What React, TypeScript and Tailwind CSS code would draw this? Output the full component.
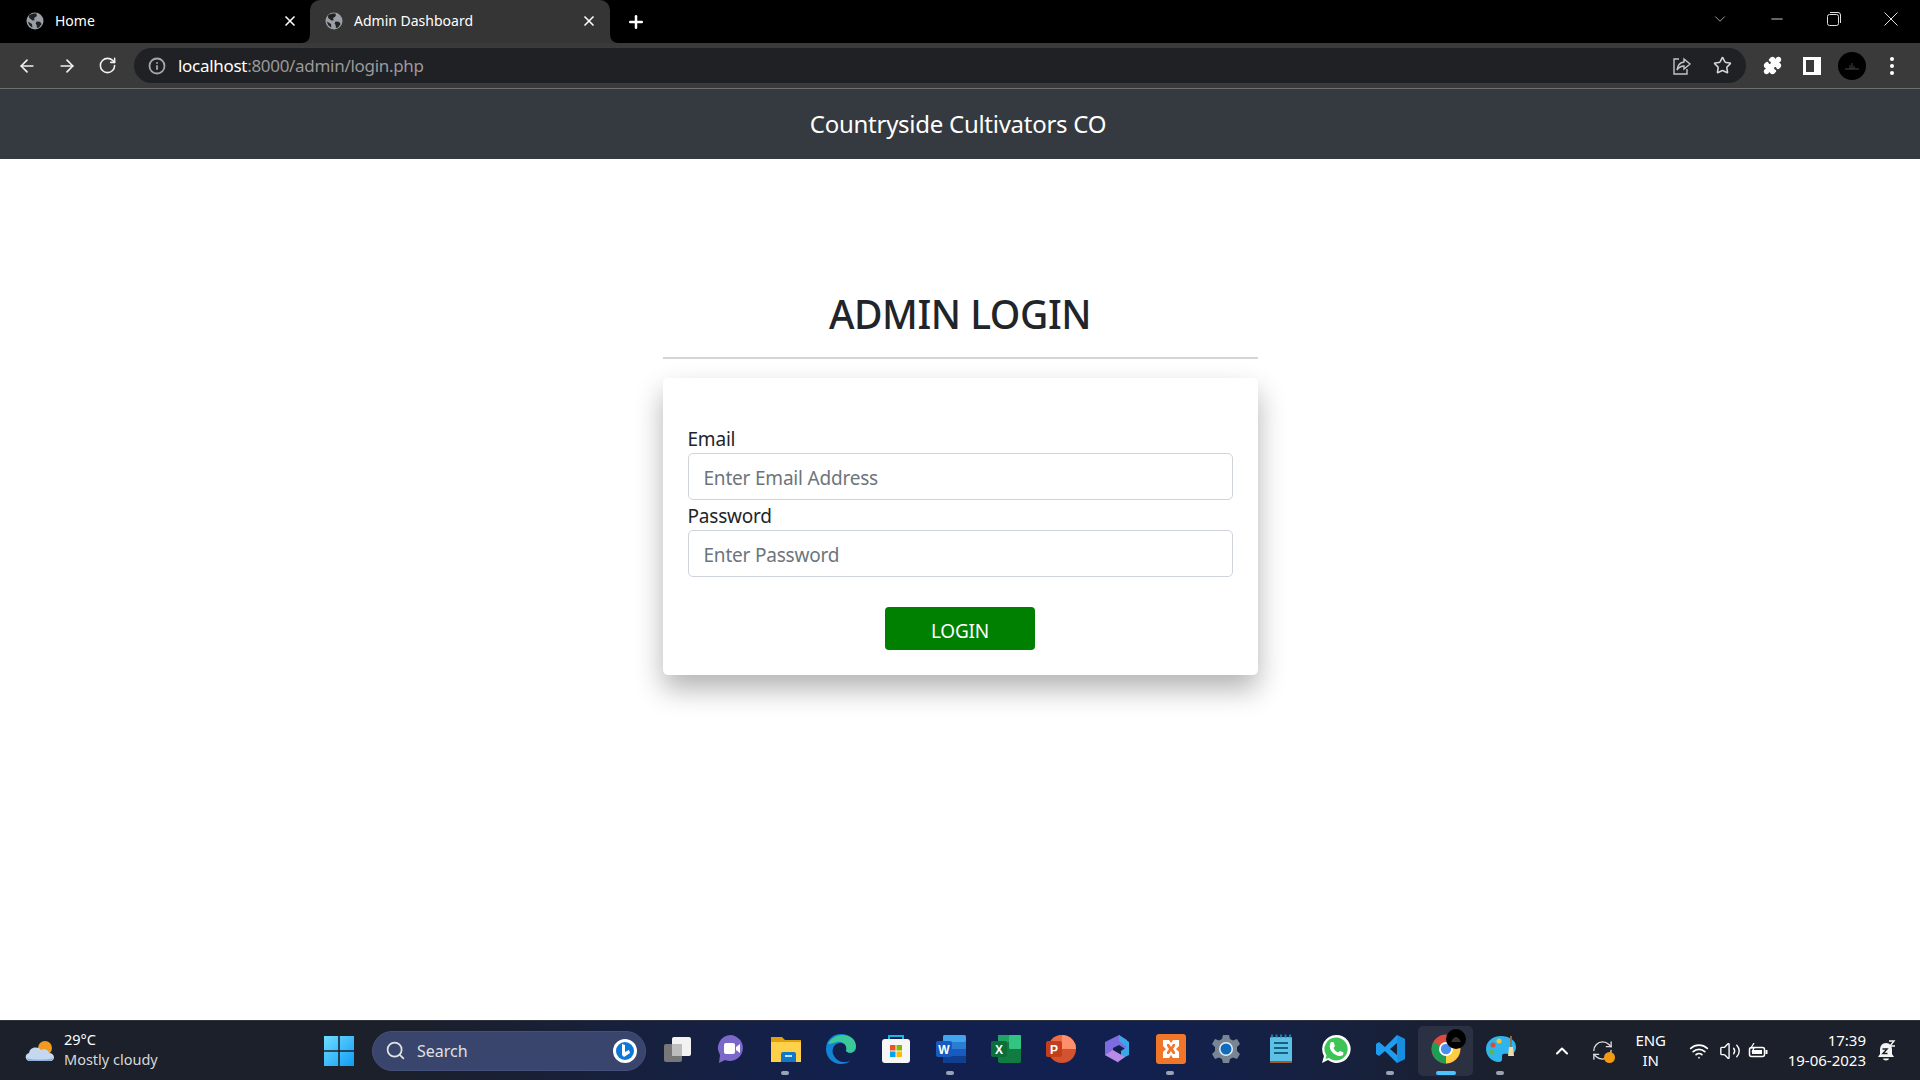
import React from "react";
import { ArrowLeft, ArrowRight, RotateCw, RefreshCw, Info, Star, Puzzle, X, Plus, ChevronDown, ChevronUp, Minus, Search, Wifi, Volume2 } from "lucide-react";

const Globe = () => (
  <svg width="18" height="18" viewBox="0 0 18 18">
    <circle cx="9" cy="9" r="8.5" fill="#9aa0a6" />
    <path d="M3 3.5 C5 2 8 1.4 10.5 1.6 L10.8 4 L8 6.2 L8.8 8.2 L6.5 8.6 L3.2 6 Z" fill="#202124" />
    <path d="M10.5 9.5 L14 9.8 L15.6 12 L13 15.4 L11 16 L10.6 13 L9.6 11.4 Z" fill="#202124" />
    <path d="M2 9.6 L6 12 L6.4 15.5 C4 14.6 2.4 12.4 2 9.6 Z" fill="#202124" />
  </svg>
);

const Tab = ({ title, active }: { title: string; active?: boolean }) => (
  <div className={`relative flex h-[43px] w-[300px] items-center pb-[2px] ${active ? "rounded-t-[10px] bg-[#353535] pl-[15px] pr-[13px]" : "pl-[26px] pr-[2px]"}`}>
    <Globe />
    <span className="ml-[11px] flex-1 text-[14px] leading-none text-white">{title}</span>
    <X size={16} color="#ffffff" strokeWidth={2.5} />
    {active && (
      <svg width="8" height="8" viewBox="0 0 8 8" className="absolute bottom-0 left-[-8px]"><path d="M8 0 V8 H0 A8 8 0 0 0 8 0 Z" fill="#353535" /></svg>
    )}
    {active && (
      <svg width="8" height="8" viewBox="0 0 8 8" className="absolute bottom-0 right-[-8px]"><path d="M0 0 V8 H8 A8 8 0 0 1 0 0 Z" fill="#353535" /></svg>
    )}
  </div>
);

const Slot = ({ children, dot, active }: { children: React.ReactNode; dot?: boolean; active?: boolean }) => (
  <div className={`relative flex h-[50px] w-[55px] shrink-0 items-center justify-center rounded-[5px] pb-[4px] ${active ? "bg-[#ffffff14]" : ""}`}>
    {children}
    {dot && <div className="absolute bottom-[1px] left-[23px] h-[4px] w-[8px] rounded-full bg-[#9aa3b5]" />}
    {active && <div className="absolute bottom-[1px] left-[18px] h-[4px] w-[20px] rounded-full bg-[#4cc2ff]" />}
  </div>
);

const Svg = ({ children, size = 30 }: { children: React.ReactNode; size?: number }) => (
  <svg width={size} height={size} viewBox="0 0 30 30">{children}</svg>
);

export default function App() {
  return (
    <div className="flex h-[1080px] w-[1920px] flex-col overflow-hidden bg-white font-['Noto_Sans','Open_Sans',sans-serif] text-[#212529]">
      {/* Chrome tab strip */}
      <div className="flex h-[43px] shrink-0 items-center bg-black">
        <div className="flex w-[310px]"><Tab title="Home" /></div>
        <Tab title="Admin Dashboard" active />
        <Plus size={20} color="#ffffff" strokeWidth={3} className="ml-[16px]" />
        <div className="flex-1" />
        <ChevronDown size={18} color="#b0b0b0" strokeWidth={1.2} className="mb-[6px] mr-[39px]" />
        <Minus size={18} color="#e0e0e0" strokeWidth={1.2} className="mb-[6px] mr-[41px]" />
        <svg width="14" height="14" viewBox="0 0 14 14" className="mb-[6px] mr-[43px]" fill="none" stroke="#e0e0e0" strokeWidth="1">
          <rect x="0.5" y="2.5" width="11" height="11" rx="2" />
          <path d="M3 .5 H11 A2.5 2.5 0 0 1 13.5 3 V11" />
        </svg>
        <svg width="14" height="14" viewBox="0 0 14 14" className="mb-[6px] mr-[22px]" stroke="#e0e0e0" strokeWidth="1"><path d="M.5 .5 L13.5 13.5 M13.5 .5 L.5 13.5" /></svg>
      </div>

      {/* Chrome toolbar */}
      <div className="flex h-[46px] shrink-0 items-center border-b border-[#6f6f6f] bg-[#3a3a3a] pl-[17px]">
        <ArrowLeft size={20} color="#f1f1f1" strokeWidth={2} />
        <ArrowRight size={20} color="#f1f1f1" strokeWidth={2} className="ml-[20px]" />
        <RotateCw size={19} color="#f1f1f1" strokeWidth={2} className="ml-[21px]" />
        <div className="ml-[17px] flex h-[35px] w-[1612px] items-center rounded-full bg-[#202124] pl-[14px]">
          <Info size={18} color="#a8a8a8" strokeWidth={2.4} />
          <span className="ml-[12px] text-[17px] tracking-[-0.3px] text-white">localhost<span className="text-[#9a9a9a]">:8000/admin/login.php</span></span>
          <div className="flex-1" />
          <svg width="20" height="20" viewBox="0 0 20 20" fill="none" stroke="#c4c4c4" strokeWidth="1.4" className="mr-[21px]">
            <path d="M7 3 H2 V18 H15 V13" />
            <path d="M12 3 L18 8 L12 13 V10 C9 10 7 11 5 14 C5.5 10 8 6.5 12 6 Z" />
          </svg>
          <Star size={19} color="#d6d6d6" strokeWidth={2} className="mr-[14px]" />
        </div>
        <Puzzle size={19} color="#ffffff" fill="#ffffff" className="ml-[17px]" />
        <svg width="18" height="18" viewBox="0 0 18 18" className="ml-[21px]">
          <path d="M0 0 H18 V18 H0 Z M3 3 V15 H11 V3 Z" fill="#ffffff" fillRule="evenodd" />
        </svg>
        <div className="ml-[17px] flex h-[28px] w-[28px] items-center justify-center rounded-full bg-black">
          <svg width="14" height="8" viewBox="0 0 14 8" stroke="#444" strokeWidth="1" fill="none"><path d="M0 7 H14 M5 7 V3 M7 7 V1 M9 7 V4" /></svg>
        </div>
        <div className="ml-[24px] flex flex-col gap-[3px]">
          <div className="h-[4px] w-[4px] rounded-full bg-white" />
          <div className="h-[4px] w-[4px] rounded-full bg-white" />
          <div className="h-[4px] w-[4px] rounded-full bg-white" />
        </div>
      </div>

      {/* Site navbar */}
      <div className="flex h-[70px] shrink-0 items-center justify-center bg-[#343a40] pr-[4px]">
        <span className="text-[24px] tracking-[-0.27px] text-white">Countryside Cultivators CO</span>
      </div>

      {/* Page */}
      <main className="flex flex-1 flex-col items-center pt-[127px]">
        <div className="w-[595px]">
          <h1 className="pt-[1px] text-center text-[39px] font-[550] leading-[54px] tracking-[-0.45px]">ADMIN LOGIN</h1>
          <div className="mt-[16px] h-[2px] bg-[#d4d4d4]" />
          <form className="mt-[19px] h-[297px] rounded-[5px] bg-white px-[25px] pt-[46px] shadow-[0_14px_28px_rgba(0,0,0,0.3)]">
            <label className="block pt-[1px] text-[19px] leading-[28px] tracking-[-0.2px]">Email</label>
            <input readOnly placeholder="Enter Email Address" className="block h-[47px] w-full rounded-[5px] border border-[#ced4da] px-[15px] pt-[2px] text-[19px] tracking-[-0.2px] outline-none placeholder:text-[#6c757d]" />
            <label className="mt-[1px] block pt-[1px] text-[19px] leading-[28px] tracking-[-0.2px]">Password</label>
            <input readOnly placeholder="Enter Password" className="block h-[47px] w-full rounded-[5px] border border-[#ced4da] px-[15px] pt-[2px] text-[19px] tracking-[-0.2px] outline-none placeholder:text-[#6c757d]" />
            <div className="mt-[30px] flex justify-center">
              <button type="button" className="h-[43px] w-[150px] rounded-[4px] bg-[#008000] pt-[5px] text-[19px] tracking-[-0.2px] text-white">LOGIN</button>
            </div>
          </form>
        </div>
      </main>

      {/* Windows taskbar */}
      <div className="flex h-[60px] shrink-0 items-center border-t border-[#30343e] bg-[linear-gradient(90deg,#1c202a_0%,#1c202a_20%,#12204f_45%,#12204f_60%,#1c202a_80%,#1c202a_100%)] text-white">
        <svg width="32" height="24" viewBox="0 0 32 24" className="ml-[24px]">
          <circle cx="21" cy="9" r="7" fill="#f09a1e" />
          <path d="M6 22 C1 22 0 15 5 14 C6 8 14 7 17 11 C20 9 25 11 25 14 C31 14 32 22 26 22 Z" fill="#c5d8ef" />
          <path d="M3 19 C8 21 22 21 29 19 C29 21 27 22 26 22 H6 C5 22 3.5 21 3 19 Z" fill="#8fb2dc" />
        </svg>
        <div className="ml-[8px] flex w-[234px] flex-col pb-[3px] text-[14.5px] leading-[20px]">
          <span>29°C</span>
          <span className="text-[#d8d8d8]">Mostly cloudy</span>
        </div>
        <svg width="30" height="30" viewBox="0 0 30 30" className="ml-[26px]">
          <defs><linearGradient id="win" x1="0" y1="0" x2="1" y2="1"><stop offset="0" stopColor="#6fdcff" /><stop offset="1" stopColor="#0f9cf5" /></linearGradient></defs>
          <path d="M0 0 H14.2 V14.2 H0 Z M15.8 0 H30 V14.2 H15.8 Z M0 15.8 H14.2 V30 H0 Z M15.8 15.8 H30 V30 H15.8 Z" fill="url(#win)" />
        </svg>
        <div className="ml-[18px] flex h-[40px] w-[274px] items-center rounded-full border border-[#45507a] bg-[#39456d] pl-[12px] pr-[8px]">
          <Search size={21} color="#e2e2e2" strokeWidth={2} />
          <span className="ml-[11px] flex-1 text-[16px] text-[#e0e0e0]">Search</span>
          <div className="flex h-[24px] w-[24px] items-center justify-center rounded-full bg-white">
            <svg width="20" height="20" viewBox="0 0 20 20"><circle cx="10" cy="10" r="9" fill="#0e78d8" /><path d="M7 3 L10 4 V11 L14 9 L15 12 L9 16 L7 14 Z" fill="#ffffff" /></svg>
          </div>
        </div>
        <div className="ml-[2px] flex items-center">
          <Slot><Svg><rect x="11" y="3" width="19" height="19" rx="2" fill="#f2f2f2" /><rect x="3" y="10" width="18" height="18" rx="2" fill="#777" /><rect x="11" y="10" width="10" height="12" fill="#bdbdbd" /></Svg></Slot>
          <Slot><Svg><path d="M15 1 A13 13 0 1 1 9 26 L3 29 L4 21 A13 13 0 0 1 15 1 Z" fill="#7b68c9" /><rect x="8" y="9" width="11" height="11" rx="2" fill="#fff" /><path d="M20 13 L24 10 V19 L20 16 Z" fill="#fff" /></Svg></Slot>
          <Slot dot><Svg><path d="M0 3 H11 L14 6 H30 V28 H0 Z" fill="#e0a010" /><path d="M0 8 H30 V28 H0 Z" fill="#ffd04a" /><path d="M10 20 Q10 18 12 18 H23 Q25 18 25 20 V28 H10 Z" fill="#0f78c8" /><rect x="14" y="21" width="7" height="2" fill="#bfe3ff" /></Svg></Slot>
          <Slot><Svg><path d="M15 0 C24 0 30 6 30 13 C30 19 23 20 20 17 C22 13 19 8 13 9 C7 10 5 17 8 22 C11 28 20 30 25 26 C22 29 18 30 15 30 C6 30 0 23 0 15 C0 6 7 0 15 0 Z" fill="#1383d4" /><path d="M2 10 C6 1 18 -2 26 4 C31 8 31 16 27 18 C24 20 21 18 20 17 C22 12 17 7 11 8 C7 9 4 10 2 10 Z" fill="#3cc99a" /></Svg></Slot>
          <Slot><Svg><path d="M8 6 V2 H22 V6" fill="none" stroke="#1ab4e8" strokeWidth="2" /><rect x="1" y="5" width="28" height="24" rx="3" fill="#f6f6f6" /><rect x="9" y="11" width="5.5" height="5.5" fill="#f25022" /><rect x="15.5" y="11" width="5.5" height="5.5" fill="#7fba00" /><rect x="9" y="17.5" width="5.5" height="5.5" fill="#00a4ef" /><rect x="15.5" y="17.5" width="5.5" height="5.5" fill="#ffb900" /></Svg></Slot>
          <Slot dot><Svg><rect x="7" y="1" width="23" height="28" rx="2" fill="#2b7cd3" /><rect x="7" y="1" width="23" height="7" rx="2" fill="#41a5ee" /><rect x="7" y="15" width="23" height="7" fill="#185abd" /><path d="M7 22 H30 V27 Q30 29 28 29 H9 Q7 29 7 27 Z" fill="#103f91" /><rect x="0" y="7" width="16" height="16" rx="2" fill="#185abd" /><text x="8" y="19.5" textAnchor="middle" fontSize="12" fontWeight="700" fill="#fff" fontFamily="Liberation Sans">W</text></Svg></Slot>
          <Slot><Svg><rect x="7" y="1" width="23" height="28" rx="2" fill="#107c41" /><rect x="18" y="1" width="12" height="14" rx="1" fill="#33c481" /><rect x="7" y="1" width="11" height="7" fill="#21a366" /><rect x="0" y="7" width="16" height="16" rx="2" fill="#0d6e3a" /><text x="8" y="19.5" textAnchor="middle" fontSize="12" fontWeight="700" fill="#fff" fontFamily="Liberation Sans">X</text></Svg></Slot>
          <Slot><Svg><circle cx="16" cy="15" r="14" fill="#d35230" /><path d="M16 1 A14 14 0 0 1 30 15 H16 Z" fill="#ff8f6b" /><path d="M16 1 V15 H2 A14 14 0 0 1 16 1 Z" fill="#ed6c47" /><rect x="0" y="7" width="16" height="16" rx="2" fill="#c43e1c" /><text x="8" y="19.5" textAnchor="middle" fontSize="12" fontWeight="700" fill="#fff" fontFamily="Liberation Sans">P</text></Svg></Slot>
          <Slot><Svg><path d="M4 8 L18 1 L26 6 V16 L18 11 L12 14 V21 L18 29 L4 21 Z" fill="#7d6be0" /><path d="M18 1 L28 8 V21 L20 25 V17 L26 13 L18 7 Z" fill="#3aa8e6" /><path d="M4 21 L12 16 L24 23 L17 28 Z" fill="#b98ae6" /></Svg></Slot>
          <Slot dot><Svg><rect width="30" height="30" rx="3" fill="#f2762a" /><path d="M7 6 H13 L15 9 L17 6 H23 V12 L20 15 L23 18 V24 H17 L15 21 L13 24 H7 V18 L10 15 L7 12 Z M11 10 V12 L13 15 L11 18 V20 H13 L15 17 L17 20 H19 V18 L17 15 L19 12 V10 H17 L15 13 L13 10 Z" fill="#fff" fillRule="evenodd" /></Svg></Slot>
          <Slot><Svg><path d="M12 1 H18 L19 5 L22 6.5 L26 5 L29 10 L26 13 V17 L29 20 L26 25 L22 23.5 L19 25 L18 29 H12 L11 25 L8 23.5 L4 25 L1 20 L4 17 V13 L1 10 L4 5 L8 6.5 L11 5 Z" fill="#7a8594" /><circle cx="15" cy="15" r="7" fill="#e8eef5" /><circle cx="15" cy="15" r="5.5" fill="#0f6cbd" /></Svg></Slot>
          <Slot><Svg><rect x="4" y="3" width="22" height="26" rx="1" fill="#5cc1e6" /><rect x="4" y="27" width="22" height="2" fill="#a05a2c" /><path d="M5 2 H25" stroke="#1d7fa8" strokeWidth="3" strokeDasharray="2 2.5" /><path d="M8 9 H22 M8 14 H22 M8 19 H22" stroke="#17607f" strokeWidth="2" /></Svg></Slot>
          <Slot><Svg><path d="M15 1 A14 14 0 1 1 7 26 L1 29 L3 22 A14 14 0 0 1 15 1 Z" fill="#fff" /><path d="M15 3.5 A11.5 11.5 0 1 1 8 24 L4.5 25 L5.5 21.5 A11.5 11.5 0 0 1 15 3.5 Z" fill="#3ec455" /><path d="M10 8 L12.5 8 L14 12 L12.5 14 C13.5 16 15 17.5 17 18.5 L19 17 L22.5 18.5 L22 21 C19 23 14 21.5 11 18 C8.5 15 8 11 10 8 Z" fill="#fff" /></Svg></Slot>
          <Slot dot><Svg><path d="M21 1 L29 5 V25 L21 29 L9 17 L3 22 L0 20 V10 L3 8 L9 13 Z M21 9 L14 15 L21 21 Z" fill="#1f9cf0" fillRule="evenodd" /><path d="M21 1 L29 5 V25 L21 29 Z M21 9 V21" fill="#0f7ecb" opacity="0.45" /></Svg></Slot>
          <div className="relative">
            <Slot active>
              <Svg>
                <circle cx="15" cy="15" r="14.5" fill="#dd4b3e" />
                <path d="M15 15 L27.5 8 A14.5 14.5 0 0 1 15 29.5 Z" fill="#ffcd40" />
                <path d="M15 15 L15 29.5 A14.5 14.5 0 0 1 2.5 8 Z" fill="#1e9e55" />
                <circle cx="15" cy="15" r="7" fill="#fff" />
                <circle cx="15" cy="15" r="5.2" fill="#4a8ef0" />
              </Svg>
            </Slot>
            <div className="absolute right-[7px] top-[3px] flex h-[20px] w-[20px] items-center justify-center rounded-full bg-black">
              <svg width="10" height="6" viewBox="0 0 10 6"><path d="M0 6 Q5 -4 10 6 Z" fill="#333" /></svg>
            </div>
          </div>
          <Slot dot><Svg><path d="M15 2 C6 2 0 8 0 15 C0 22 6 28 13 28 C17 28 16 24 16 22 C16 19 20 20 23 20 C28 20 30 17 30 13 C30 6 23 2 15 2 Z" fill="#2fb4ee" /><circle cx="7" cy="11" r="2.5" fill="#e04a3a" /><circle cx="6" cy="18" r="2.5" fill="#5aba47" /><circle cx="13" cy="7" r="2.5" fill="#f4c430" /><path d="M24 2 L26 2 L25.5 15 L24.5 15 Z" fill="#a06a30" /><path d="M23 13 H27 L28 22 H22 Z" fill="#f1d9a8" /></Svg></Slot>
        </div>
        <div className="flex-1" />
        <ChevronUp size={20} color="#ffffff" strokeWidth={2.5} className="mr-[19px]" />
        <div className="relative mr-[19px] h-[24px] w-[24px]">
          <RefreshCw size={23} color="#dddddd" strokeWidth={1.4} />
          <div className="absolute bottom-[0px] right-[0px] h-[11px] w-[11px] rounded-full bg-[#f59a10]" />
        </div>
        <div className="mr-[21px] flex w-[34px] flex-col items-center pb-[2px] text-[15px] leading-[20px] tracking-[-0.1px]"><span>ENG</span><span>IN</span></div>
        <Wifi size={20} color="#ffffff" strokeWidth={2} className="mr-[10px]" />
        <Volume2 size={22} color="#ffffff" strokeWidth={1.5} className="mr-[7px]" />
        <svg width="20" height="16" viewBox="0 0 20 16" className="mr-[20px]" fill="none">
          <rect x="1.5" y="4.5" width="15" height="9" rx="2" fill="#1c202a" stroke="#ffffff" strokeWidth="1.5" />
          <rect x="4" y="7" width="10" height="4" fill="#ffffff" />
          <rect x="17.5" y="7" width="2" height="4" fill="#ffffff" />
          <path d="M6 0 L3 5 H6 L4 9" stroke="#ffffff" strokeWidth="1.2" />
        </svg>
        <div className="flex flex-col items-end pb-[2px] text-[15px] leading-[20px]"><span>17:39</span><span>19-06-2023</span></div>
        <svg width="20" height="22" viewBox="0 0 20 22" className="ml-[10px] mr-[24px]">
          <path d="M10 3 C6 3 4 6 4 10 V14 L2 17 H18 L16 14 V10 C16 6 14 3 10 3 Z M7 18.5 H13 C13 21 7 21 7 18.5 Z" fill="#f4f4f4" />
          <path d="M6.5 9 H11 L7 13.5 H11.5" fill="none" stroke="#1c202a" strokeWidth="1.5" />
          <path d="M13 1 H18 L14 6 H19" fill="none" stroke="#f4f4f4" strokeWidth="1.4" />
        </svg>
      </div>
    </div>
  );
}
